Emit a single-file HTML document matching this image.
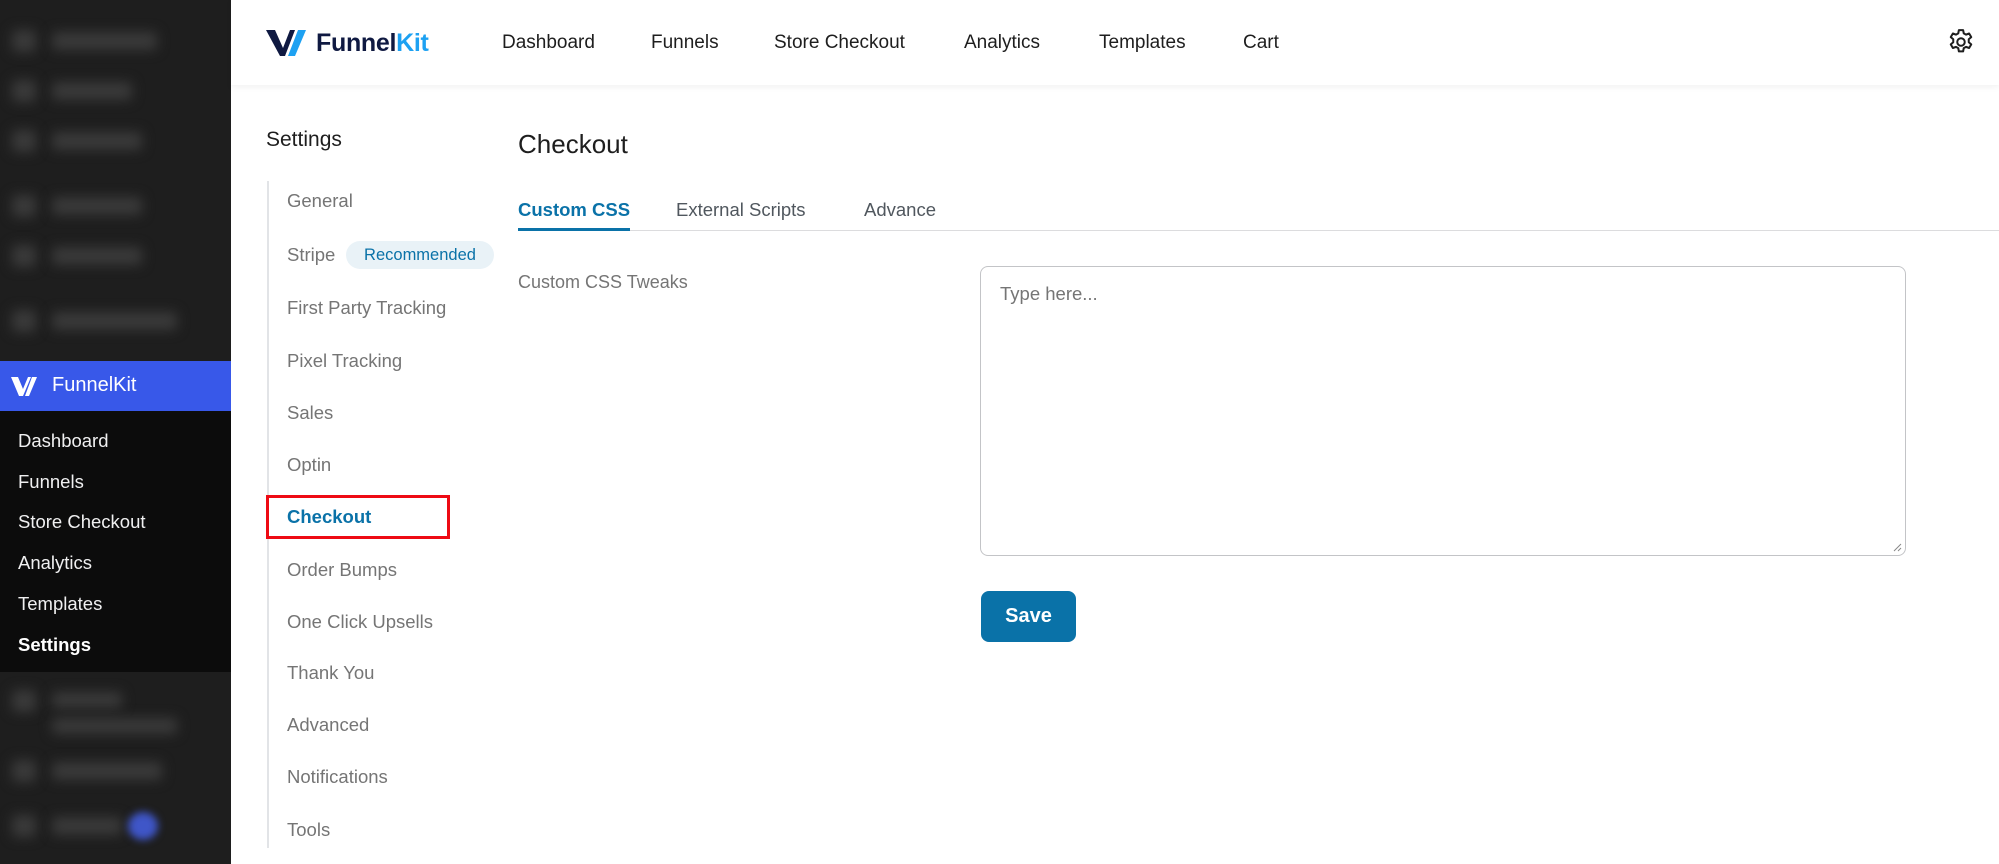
<!DOCTYPE html>
<html><head><meta charset="utf-8"><style>
*{margin:0;padding:0;box-sizing:border-box}
body{width:1999px;height:864px;overflow:hidden;background:#fff;font-family:"Liberation Sans",sans-serif;position:relative}
.abs{position:absolute;white-space:nowrap}
#side{position:absolute;left:0;top:0;width:231px;height:864px;background:#1e1e1e}
.blur{position:absolute;background:#3a3a3a;filter:blur(6px);border-radius:4px}
#hdr{position:absolute;left:231px;top:0;right:0;height:85px;background:#fff;box-shadow:0 2px 6px rgba(0,0,0,.06)}
.nav{font-size:19px;color:#1e1e1e;top:32px}
.mi{left:287px;font-size:18.5px;color:#757575}
.tab{top:199px;font-size:18.5px;color:#50575e}
</style></head><body>
<div id="side">
  <div class="blur" style="left:12px;top:30px;width:24px;height:22px"></div><div class="blur" style="left:52px;top:32px;width:105px;height:18px"></div>
  <div class="blur" style="left:12px;top:80px;width:24px;height:22px"></div><div class="blur" style="left:52px;top:82px;width:80px;height:18px"></div>
  <div class="blur" style="left:12px;top:130px;width:24px;height:22px"></div><div class="blur" style="left:52px;top:132px;width:90px;height:18px"></div>
  <div class="blur" style="left:12px;top:195px;width:24px;height:22px"></div><div class="blur" style="left:52px;top:197px;width:90px;height:18px"></div>
  <div class="blur" style="left:12px;top:245px;width:24px;height:22px"></div><div class="blur" style="left:52px;top:247px;width:90px;height:18px"></div>
  <div class="blur" style="left:12px;top:310px;width:24px;height:22px"></div><div class="blur" style="left:52px;top:312px;width:125px;height:18px"></div>
  <div style="position:absolute;left:0;top:361px;width:231px;height:50px;background:#3858e9"></div>
  <svg class="abs" style="left:10px;top:375px" width="30" height="22" viewBox="0 0 30 22"><path d="M1 2h7l5 12 5-12h3l-8 19h-4z" fill="#fff"/><path d="M22 2h5l-8 19h-4z" fill="#fff"/></svg>
  <div class="abs" style="left:52px;top:374px;font-size:20px;color:#fff">FunnelKit</div>
  <div style="position:absolute;left:0;top:411px;width:231px;height:261px;background:#0c0c0c"></div>
  <div class="abs" style="left:18px;top:430px;font-size:18.5px;color:#f0f0f1">Dashboard</div>
  <div class="abs" style="left:18px;top:471px;font-size:18.5px;color:#f0f0f1">Funnels</div>
  <div class="abs" style="left:18px;top:511px;font-size:18.5px;color:#f0f0f1">Store Checkout</div>
  <div class="abs" style="left:18px;top:552px;font-size:18.5px;color:#f0f0f1">Analytics</div>
  <div class="abs" style="left:18px;top:593px;font-size:18.5px;color:#f0f0f1">Templates</div>
  <div class="abs" style="left:18px;top:634px;font-size:18.5px;color:#fff;font-weight:bold">Settings</div>
  <div class="blur" style="left:12px;top:690px;width:24px;height:22px"></div><div class="blur" style="left:52px;top:692px;width:70px;height:16px"></div><div class="blur" style="left:52px;top:718px;width:125px;height:16px"></div>
  <div class="blur" style="left:12px;top:760px;width:24px;height:22px"></div><div class="blur" style="left:52px;top:762px;width:110px;height:18px"></div>
  <div class="blur" style="left:12px;top:815px;width:24px;height:22px"></div><div class="blur" style="left:52px;top:817px;width:70px;height:18px"></div>
  <div style="position:absolute;left:128px;top:812px;width:30px;height:28px;border-radius:50%;background:#3f56c8;filter:blur(4px)"></div>
</div>
<div id="hdr">
  <svg class="abs" style="left:35px;top:28px" width="45" height="30" viewBox="0 0 45 30"><path d="M0 2h9l8 18 7-18h5L19 28h-5z" fill="#0f1941"/><path d="M32 2h8L29 28h-7z" fill="#1da1f2"/></svg>
  <div class="abs" style="left:85px;top:29px;font-size:25px;font-weight:bold;color:#0f1941;letter-spacing:-0.3px">Funnel<span style="color:#1da1f2">Kit</span></div>
</div>
<div class="abs nav" style="left:502px">Dashboard</div>
<div class="abs nav" style="left:651px">Funnels</div>
<div class="abs nav" style="left:774px">Store Checkout</div>
<div class="abs nav" style="left:964px">Analytics</div>
<div class="abs nav" style="left:1099px">Templates</div>
<div class="abs nav" style="left:1243px">Cart</div>
<svg class="abs" style="left:1946px;top:27px" width="30" height="30" viewBox="0 0 24 24" fill="none" stroke="#1e1e1e" stroke-width="1.6" stroke-linejoin="round"><path d="M10.3 2.5h3.4l.5 2.6 1.8 1 2.5-.9 1.7 2.9-2 1.7v2.4l2 1.7-1.7 2.9-2.5-.9-1.8 1-.5 2.6h-3.4l-.5-2.6-1.8-1-2.5.9-1.7-2.9 2-1.7v-2.4l-2-1.7 1.7-2.9 2.5.9 1.8-1z"/><circle cx="12" cy="12" r="3"/></svg>

<div class="abs" style="left:266px;top:128px;font-size:21px;color:#1e1e1e">Settings</div>
<div style="position:absolute;left:267px;top:181px;width:2px;height:667px;background:#e2e4e7"></div>
<div class="abs mi" style="top:190px">General</div>
<div class="abs mi" style="top:244px">Stripe</div>
<div class="abs" style="left:346px;top:241px;width:148px;height:28px;border-radius:14px;background:#e9f2f7;color:#0a72a8;font-size:16.5px;line-height:28px;text-align:center">Recommended</div>
<div class="abs mi" style="top:297px">First Party Tracking</div>
<div class="abs mi" style="top:350px">Pixel Tracking</div>
<div class="abs mi" style="top:402px">Sales</div>
<div class="abs mi" style="top:454px">Optin</div>
<div class="abs mi" style="top:506px;color:#0a72a8;font-weight:bold">Checkout</div>
<div style="position:absolute;left:266px;top:495px;width:184px;height:44px;border:3px solid #ee0a14"></div>
<div class="abs mi" style="top:559px">Order Bumps</div>
<div class="abs mi" style="top:611px">One Click Upsells</div>
<div class="abs mi" style="top:662px">Thank You</div>
<div class="abs mi" style="top:714px">Advanced</div>
<div class="abs mi" style="top:766px">Notifications</div>
<div class="abs mi" style="top:819px">Tools</div>

<div class="abs" style="left:518px;top:129px;font-size:26px;color:#1e1e1e;line-height:30px">Checkout</div>
<div class="abs tab" style="left:518px;color:#0a72a8;font-weight:bold">Custom CSS</div>
<div class="abs tab" style="left:676px">External Scripts</div>
<div class="abs tab" style="left:864px">Advance</div>
<div style="position:absolute;left:518px;top:230px;right:0;height:1px;background:#dcdcde"></div>
<div style="position:absolute;left:518px;top:228px;width:112px;height:3px;background:#0a72a8"></div>
<div class="abs" style="left:518px;top:272px;font-size:18px;color:#757575">Custom CSS Tweaks</div>
<div style="position:absolute;left:980px;top:266px;width:926px;height:290px;border:1px solid #c3c4c7;border-radius:8px"></div>
<div class="abs" style="left:1000px;top:283px;font-size:18.5px;color:#757575">Type here...</div>
<svg class="abs" style="left:1892px;top:542px" width="10" height="10"><path d="M9 2L2 9M9 6L6 9" stroke="#888" stroke-width="1"/></svg>
<div class="abs" style="left:981px;top:591px;width:95px;height:51px;border-radius:8px;background:#0a72a8;color:#fff;font-size:20px;font-weight:bold;line-height:51px;text-align:center">Save</div>
</body></html>
